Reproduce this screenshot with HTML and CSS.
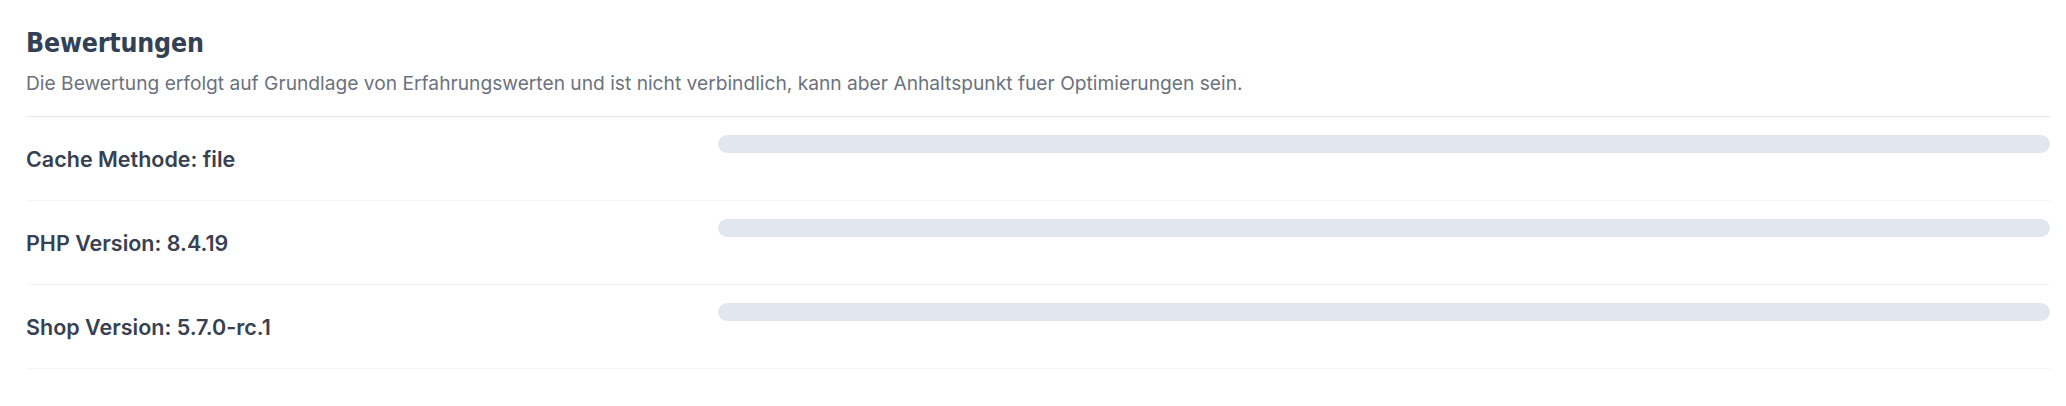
FILE: index.html
```html
<!DOCTYPE html>
<html lang="de">
<head>
<meta charset="utf-8">
<title>Bewertungen</title>
<link rel="stylesheet" href="styles.css">
</head>
<body>
<section class="panel">
  <header class="panel-head">
    <h2 class="panel-title">Bewertungen</h2>
    <p class="panel-desc">Die Bewertung erfolgt auf Grundlage von Erfahrungswerten und ist nicht verbindlich, kann aber Anhaltspunkt fuer Optimierungen sein.</p>
  </header>
  <div class="rows">
    <div class="row">
      <div class="row-label">Cache Methode: file</div>
      <div class="row-value"><div class="bar"></div></div>
    </div>
    <div class="row">
      <div class="row-label">PHP Version: 8.4.19</div>
      <div class="row-value"><div class="bar"></div></div>
    </div>
    <div class="row">
      <div class="row-label">Shop Version: 5.7.0-rc.1</div>
      <div class="row-value"><div class="bar"></div></div>
    </div>
  </div>
</section>
</body>
</html>
```
FILE: styles.css
```css
html, body {
  margin: 0;
  padding: 0;
  background: #ffffff;
}

body {
  font-family: Inter, "Noto Sans", "Liberation Sans", sans-serif;
}

.panel {
  padding: 25px 16px 0 26px;
}

.panel-head {
  padding-bottom: 19px;
  border-bottom: 1px solid #e5e7eb;
}

.panel-title {
  margin: 0;
  font-family: "DejaVu Sans", sans-serif;
  font-stretch: condensed;
  font-weight: 700;
  font-size: 26.5px;
  line-height: 36px;
  letter-spacing: -0.2px;
  color: #334155;
}

.panel-desc {
  margin: 8px 0 0;
  font-size: 19.2px;
  line-height: 28px;
  color: #6b7280;
}

.row {
  display: flex;
  min-height: 83px;
  border-bottom: 1px solid #f3f4f6;
}

.row-label {
  width: 692px;
  flex: none;
  display: flex;
  align-items: center;
  font-size: 21.5px;
  font-weight: 600;
  color: #374151;
}

.row-value {
  flex: 1;
  padding-top: 18px;
}

.bar {
  height: 18px;
  border-radius: 9px;
  background: #e2e6ee;
}
```
